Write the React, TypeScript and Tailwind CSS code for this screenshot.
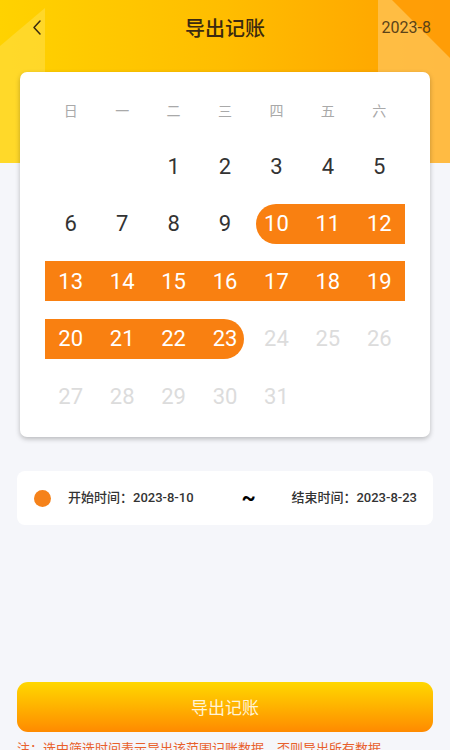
import React from "react";

const weekdays = ["日", "一", "二", "三", "四", "五", "六"];

type Cell = { d: number | null; state?: "normal" | "sel" | "dim" };

function buildRows(): Cell[][] {
  const cells: Cell[] = [];
  for (let i = 0; i < 2; i++) cells.push({ d: null });
  for (let d = 1; d <= 31; d++) {
    let state: Cell["state"] = "normal";
    if (d >= 10 && d <= 23) state = "sel";
    else if (d > 23) state = "dim";
    cells.push({ d, state });
  }
  while (cells.length % 7) cells.push({ d: null });
  const rows: Cell[][] = [];
  for (let i = 0; i < cells.length; i += 7) rows.push(cells.slice(i, i + 7));
  return rows;
}

export default function App() {
  const rows = buildRows();
  const font = { fontFamily: 'Roboto, "Noto Sans CJK SC", sans-serif' };
  return (
    <div className="relative min-h-[750px] w-[450px] overflow-hidden bg-[#f5f6fa]" style={font}>
      {/* header background */}
      <div className="absolute left-0 top-0 h-[163px] w-full bg-gradient-to-r from-[#ffd200] via-[#ffbd00] to-[#ff9f00]">
        <svg className="absolute left-0 top-0" width="450" height="163" viewBox="0 0 450 163">
          <polygon points="0,46 45,8 45,163 0,163" fill="#ffe35a" opacity="0.45" />
          <polygon points="378,0 450,0 450,163 378,163" fill="#ffc45a" opacity="0.75" />
          <polygon points="392,0 450,0 450,58" fill="#ff9a00" opacity="0.9" />
        </svg>
      </div>

      <div className="relative flex flex-col">
        {/* nav */}
        <div className="relative flex h-[55px] items-center justify-center">
          <svg className="absolute left-[31px] top-[19px]" width="11" height="17" viewBox="0 0 11 17">
            <path d="M9 2 L3 8.5 L9 15" stroke="#3a2a10" strokeWidth="1.5" fill="none" strokeLinecap="round" strokeLinejoin="round" />
          </svg>
          <span className="text-[20px] font-medium text-[#3b2a10]" style={{ fontFamily: '"Noto Sans CJK SC", sans-serif' }}>
            导出记账
          </span>
          <span className="absolute right-[19px] top-[16px] text-[16px] text-[#5b4318]">2023-8</span>
        </div>

        {/* calendar card */}
        <div className="mx-[20px] mt-[17px] rounded-[7px] bg-white px-[25px] pb-[21px] pt-[18px] shadow-[0_2px_5px_rgba(0,0,0,0.25)]">
          <div className="grid h-[40px] grid-cols-7 items-center">
            {weekdays.map((w) => (
              <div key={w} className="text-center text-[14px] text-[#a9a9a9]" style={{ fontFamily: '"Noto Sans CJK SC", sans-serif' }}>
                {w}
              </div>
            ))}
          </div>
          <div className="mt-[16px] flex flex-col gap-[17.5px]">
            {rows.map((row, ri) => (
              <div key={ri} className="grid h-[40px] grid-cols-7">
                {row.map((c, ci) => {
                  const sel = c.state === "sel";
                  let cls = "flex items-center justify-center text-[22px] ";
                  if (sel) {
                    cls += "bg-[#f98011] text-white ";
                    if (c.d === 10) cls += "ml-[5px] pr-[5px] rounded-l-[20px] ";
                    if (c.d === 23) cls += "mr-[7px] pl-[7px] rounded-r-[20px] ";
                  } else if (c.state === "dim") {
                    cls += "text-[#dcdcdc] ";
                  } else {
                    cls += "text-[#333333] ";
                  }
                  return (
                    <div key={ci} className={cls}>
                      {c.d ?? ""}
                    </div>
                  );
                })}
              </div>
            ))}
          </div>
        </div>

        {/* range info */}
        <div className="mx-[17px] mt-[34px] flex h-[54px] items-center rounded-[8px] bg-white pl-[17px] pr-[16px]">
          <div className="h-[17px] w-[17px] rounded-full bg-[#f5821a]" />
          <span className="ml-[17px] text-[13px] font-medium text-[#333]">开始时间：2023-8-10</span>
          <span className="ml-[48px] text-[22px] font-bold leading-none text-black">~</span>
          <span className="ml-auto text-[13px] font-medium text-[#333]">结束时间：2023-8-23</span>
        </div>

        {/* export button */}
        <div className="mx-[17px] mt-[157px] flex h-[50px] items-center justify-center rounded-[11px] bg-gradient-to-b from-[#ffd700] to-[#ff8a00]">
          <span className="text-[17px] text-[#fff4d6]" style={{ fontFamily: '"Noto Sans CJK SC", sans-serif' }}>
            导出记账
          </span>
        </div>

        <div className="ml-[17px] mt-[6px] whitespace-nowrap text-[13px] text-[#e8602c]" style={{ fontFamily: '"Noto Sans CJK SC", sans-serif' }}>
          注：选中筛选时间表示导出该范围记账数据，否则导出所有数据
        </div>
      </div>
    </div>
  );
}
